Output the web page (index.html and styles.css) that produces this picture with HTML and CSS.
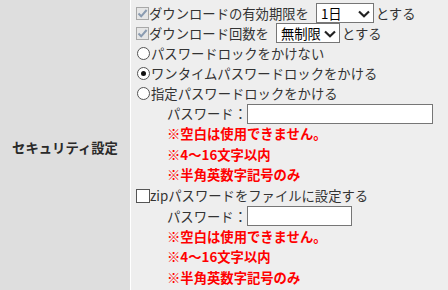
FILE: index.html
```html
<!DOCTYPE html>
<html lang="ja">
<head>
    <meta charset="UTF-8">
    <title>セキュリティ設定</title>
    <link rel="stylesheet" href="styles.css">
</head>
<body>

<div class="setting">
    <div class="label">セキュリティ設定</div>
    <div class="content">
        <div class="line">
            <svg class="box" viewBox="0 0 13 13"><rect x="0.5" y="0.5" width="12" height="12" fill="#e6e6e6" stroke="#a8a8a8"/><path d="M2.5 6.5 L5.2 9.3 L10.6 3" fill="none" stroke="#8a9bb0" stroke-width="2"/></svg>ダウンロードの有効期限を
            <span class="sel w1"><select><option>1日</option></select><svg class="chev" viewBox="0 0 12 8"><path d="M1 1.5 L6 6.2 L11 1.5" fill="none" stroke="#222" stroke-width="2.2"/></svg></span>とする
        </div>
        <div class="line">
            <svg class="box" viewBox="0 0 13 13"><rect x="0.5" y="0.5" width="12" height="12" fill="#e6e6e6" stroke="#a8a8a8"/><path d="M2.5 6.5 L5.2 9.3 L10.6 3" fill="none" stroke="#8a9bb0" stroke-width="2"/></svg>ダウンロード回数を
            <span class="sel w2"><select><option>無制限</option></select><svg class="chev" viewBox="0 0 12 8"><path d="M1 1.5 L6 6.2 L11 1.5" fill="none" stroke="#222" stroke-width="2.2"/></svg></span>とする
        </div>
        <div class="line"><span class="radio"></span>パスワードロックをかけない</div>
        <div class="line"><span class="radio on"></span>ワンタイムパスワードロックをかける</div>
        <div class="line"><span class="radio"></span>指定パスワードロックをかける</div>
        <div class="sub">
            <div class="pw">パスワード：<input type="text" class="long"></div>
            <p class="note">※空白は使用できません。</p>
            <p class="note">※4～16文字以内</p>
            <p class="note">※半角英数字記号のみ</p>
        </div>
        <div class="line"><span class="check"></span>zipパスワードをファイルに設定する</div>
        <div class="sub">
            <div class="pw">パスワード：<input type="text" class="short"></div>
            <p class="note">※空白は使用できません。</p>
            <p class="note">※4～16文字以内</p>
            <p class="note">※半角英数字記号のみ</p>
        </div>
    </div>
</div>

</body>
</html>
```

FILE: styles.css
```css
body { margin: 0; font-family: "Noto Sans CJK JP", sans-serif; font-size: 13.33px; color: #333; background: #eee; }
.setting { display: grid; grid-template-columns: 130px 1fr; column-gap: 1px; background: #fff; }
.label { background: #dedede; display: flex; align-items: center; justify-content: center; font-weight: bold; color: #2a2a2a; padding-top: 1px; }
.content { background: #eee; padding: 3px 0 6px 5px; }
.line { display: flex; align-items: center; height: 20px; white-space: nowrap; }
.box { width: 13px; height: 13px; flex: none; }
.check { width: 12px; height: 12px; border: 1px solid #555; background: #fff; flex: none; }
.radio { width: 11px; height: 11px; border: 1px solid #555; border-radius: 50%; background: #fff; margin: 0 1px; flex: none; position: relative; }
.radio.on::after { content: ""; position: absolute; left: 3px; top: 3px; width: 5px; height: 5px; border-radius: 50%; background: #111; }
.sel { position: relative; display: inline-block; margin: 0 2px 0 7px; }
.sel select { appearance: none; -webkit-appearance: none; font: inherit; color: #000; background: #fff; border: 1px solid #767676; border-radius: 0; height: 20px; padding: 0 0 0 4px; display: block; }
.w1 select { width: 58px; }
.w2 select { width: 64px; }
.chev { position: absolute; right: 4px; top: 7px; width: 12px; height: 8px; pointer-events: none; }
.sub { padding-left: 31px; }
.pw { display: flex; align-items: center; height: 21px; }
.pw input { height: 20px; box-sizing: border-box; border: 1px solid #767676; padding: 0 2px; margin: 0; font: inherit; }
.long { width: 186px; }
.short { width: 105px; }
.note { margin: 0; color: #f00; font-weight: bold; line-height: 20.5px; }
```
